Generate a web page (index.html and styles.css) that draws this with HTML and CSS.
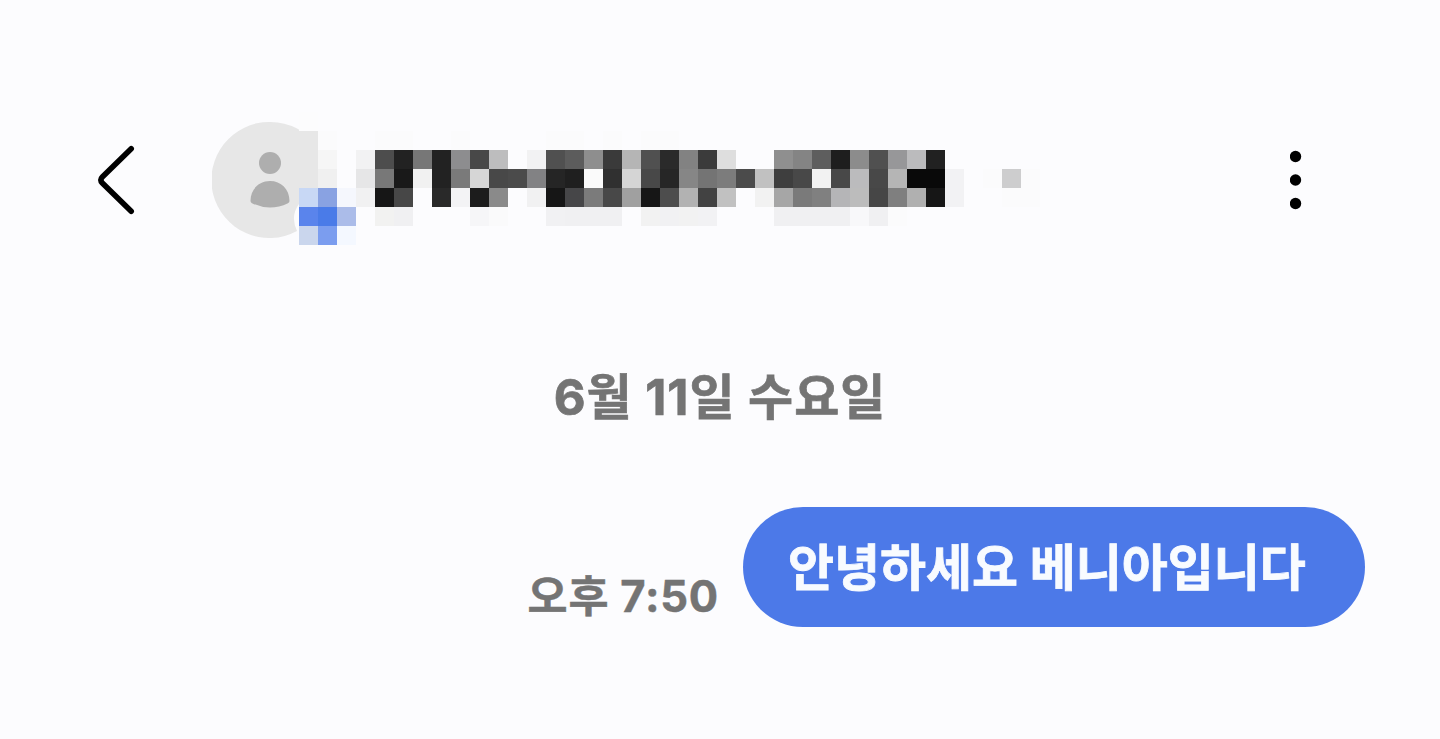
FILE: index.html
```html
<!DOCTYPE html>
<html lang="ko">
    <head>
        <title>메시지</title>
        <meta charset="UTF-8">
        <meta name="viewport" content="width=device-width, initial-scale=1">
        <link rel="stylesheet" href="styles.css">
    </head>

    <body>
        <header class="header">
            <svg class="back" viewBox="0 0 40 70">
                <path d="M34.200 3.800 L5.300 32 Q2.300 35 5.300 38 L34.200 66.200"/>
            </svg>
            <div class="contact">
                <svg class="avatar" viewBox="0 0 116 116">
                    <path fill="#e7e7e7" d="M58 0 A58 58 0 1 0 85 109 Q78 94 87 82 L106 66 V25 A58 58 0 0 0 58 0z"/>
                    <circle cx="58" cy="41" r="11" fill="#aeaeae"/>
                    <path fill="#aeaeae" d="M38.5 79 C38.5 67 47 59 58 59 S77.500 67 77.500 79 Q77.500 80.500 76 81.200 Q58 90 40 81.200 Q38.500 80.500 38.500 79z"/>
                </svg>
                <svg class="mosaic" id="mosaic" viewBox="0 0 39 7" shape-rendering="crispEdges"></svg>
            </div>
            <svg class="more" viewBox="0 0 12 60">
                <circle cx="5.500" cy="6.500" r="5.700"/>
                <circle cx="5.500" cy="30" r="5.700"/>
                <circle cx="5.500" cy="53.500" r="5.700"/>
            </svg>
        </header>

        <main class="chat">
            <p class="date">6월 11일 수요일</p>
            <div class="message">
                <span class="time">오후 7:50</span>
                <div class="bubble">안녕하세요 베니아입니다</div>
            </div>
        </main>

        <script>
            // one line per row: first column, then the cell colours ("-" is empty)
            const rows = [
                [0, "fcfcfd"],
                [0, "e7e7e7 fbfbfc - - fbfbfc fbfbfc - - fbfbfc - - - - fbfbfc fbfbfc - fbfbfc - fbfbfc fbfbfc"],
                [0, "e7e7e7 f6f6f6 - f2f2f3 4d4d4d 222222 777777 222222 8d8d8f 484848 bdbdbe - f2f2f3 505050 5c5c5c 8e8e8e 3a3a3a b5b5b5 505050 2a2a2a 828282 3b3b3b dedede - - 8f8f8f 848484 5e5e5e 1e1e1e 8c8c8c 505050 979799 bbbbbd 212121"],
                [0, "e7e7e7 f0f0f0 - e6e6e7 787878 191919 f1f1f1 222222 7a7a7a d6d6d6 484848 4b4b4b 828284 252525 1f1f1f fafafa 303030 d5d5d5 484848 262626 868686 747474 7c7c7c 4b4b4b c1c1c1 3e3e3e 484848 f2f2f2 484848 bbbbbd 484848 b5b5b5 090909 090909 f2f2f4 - fbfbfc cdcdce fbfbfc"],
                [0, "c8d8f5 89a2e2 f5f7fd f1f1f2 161616 474747 - 292929 f3f3f5 1c1c1c 8a8a8a - f1f1f2 161616 464648 7b7b7b 484848 a0a0a0 161616 4d4d4d b2b2b2 424242 c1c1c1 - f2f2f2 a6a6a6 7a7a7a 808080 b5b5b7 bcbcbc 464646 7f7f7f b0b0b0 161616 f2f2f4 - - fbfbfc fbfbfc"],
                [0, "5a84ec 4a7be8 abbce9 - f2f2f1 f0f0f2 - - - f6f6f8 fafafb - - f1f1f3 f0f0f2 f0f0f2 f0f0f2 - f2f2f2 f1f1f3 f2f2f2 f2f2f4 - - - f0f0f2 f0f0f2 f0f0f2 f0f0f2 f8f8fa f0f0f2 fbfbfc"],
                [0, "cad6ed 7b9def f4f8ff"]
            ];
            const mosaic = document.getElementById("mosaic");

            rows.forEach(([start, colors], y) => {
                colors.split(" ").forEach((color, i) => {
                    if (color === "-") return;
                    const cell = document.createElementNS("http://www.w3.org/2000/svg", "rect");
                    cell.setAttribute("x", start + i);
                    cell.setAttribute("y", y);
                    cell.setAttribute("width", 1);
                    cell.setAttribute("height", 1);
                    cell.setAttribute("fill", "#" + color);
                    mosaic.appendChild(cell);
                });
            });
        </script>
    </body>
</html>
```

FILE: styles.css
```css
body {
    margin: 0;
    height: 739px;
    overflow: hidden;
    background-color: #fcfcfe;
    font-family: Inter, "Noto Sans CJK KR", sans-serif;
    font-weight: 700;
}
.header {
    display: flex;
    align-items: flex-start;
    padding: 112px 138px 0 97px;
    height: 133px;
}
.back {
    width: 40px;
    height: 70px;
    margin-top: 33px;
    fill: none;
    stroke: #000;
    stroke-width: 5.6;
    stroke-linecap: round;
}
.contact {
    display: flex;
    align-items: flex-start;
    margin-left: 75px;
}
.avatar {
    width: 116px;
    height: 116px;
    margin-top: 10px;
}
.mosaic {
    width: 741px;
    height: 133px;
    margin-left: -29px;
}
.more {
    width: 12px;
    height: 60px;
    margin-top: 38px;
    margin-left: auto;
}
.chat {
    padding: 123px 75px 0;
}
.date {
    margin: 0;
    height: 60px;
    line-height: 60px;
    text-align: center;
    font-size: 49px;
    letter-spacing: 1px;
    color: #747474;
    -webkit-text-stroke: 0.7px #747474;
}
.message {
    display: flex;
    justify-content: flex-end;
    align-items: flex-end;
    gap: 24px;
    margin-top: 79px;
}
.time {
    line-height: 60px;
    margin-bottom: 1px;
    font-size: 43.5px;
    letter-spacing: 0.8px;
    color: #747474;
    -webkit-text-stroke: 0.5px #747474;
}
.bubble {
    box-sizing: border-box;
    width: 622px;
    height: 120px;
    padding-left: 45px;
    border-radius: 60px;
    background-color: #4c79e8;
    color: #f8fbff;
    font-size: 50px;
    line-height: 123px;
    white-space: nowrap;
    -webkit-text-stroke: 0.8px #f8fbff;
}
```
